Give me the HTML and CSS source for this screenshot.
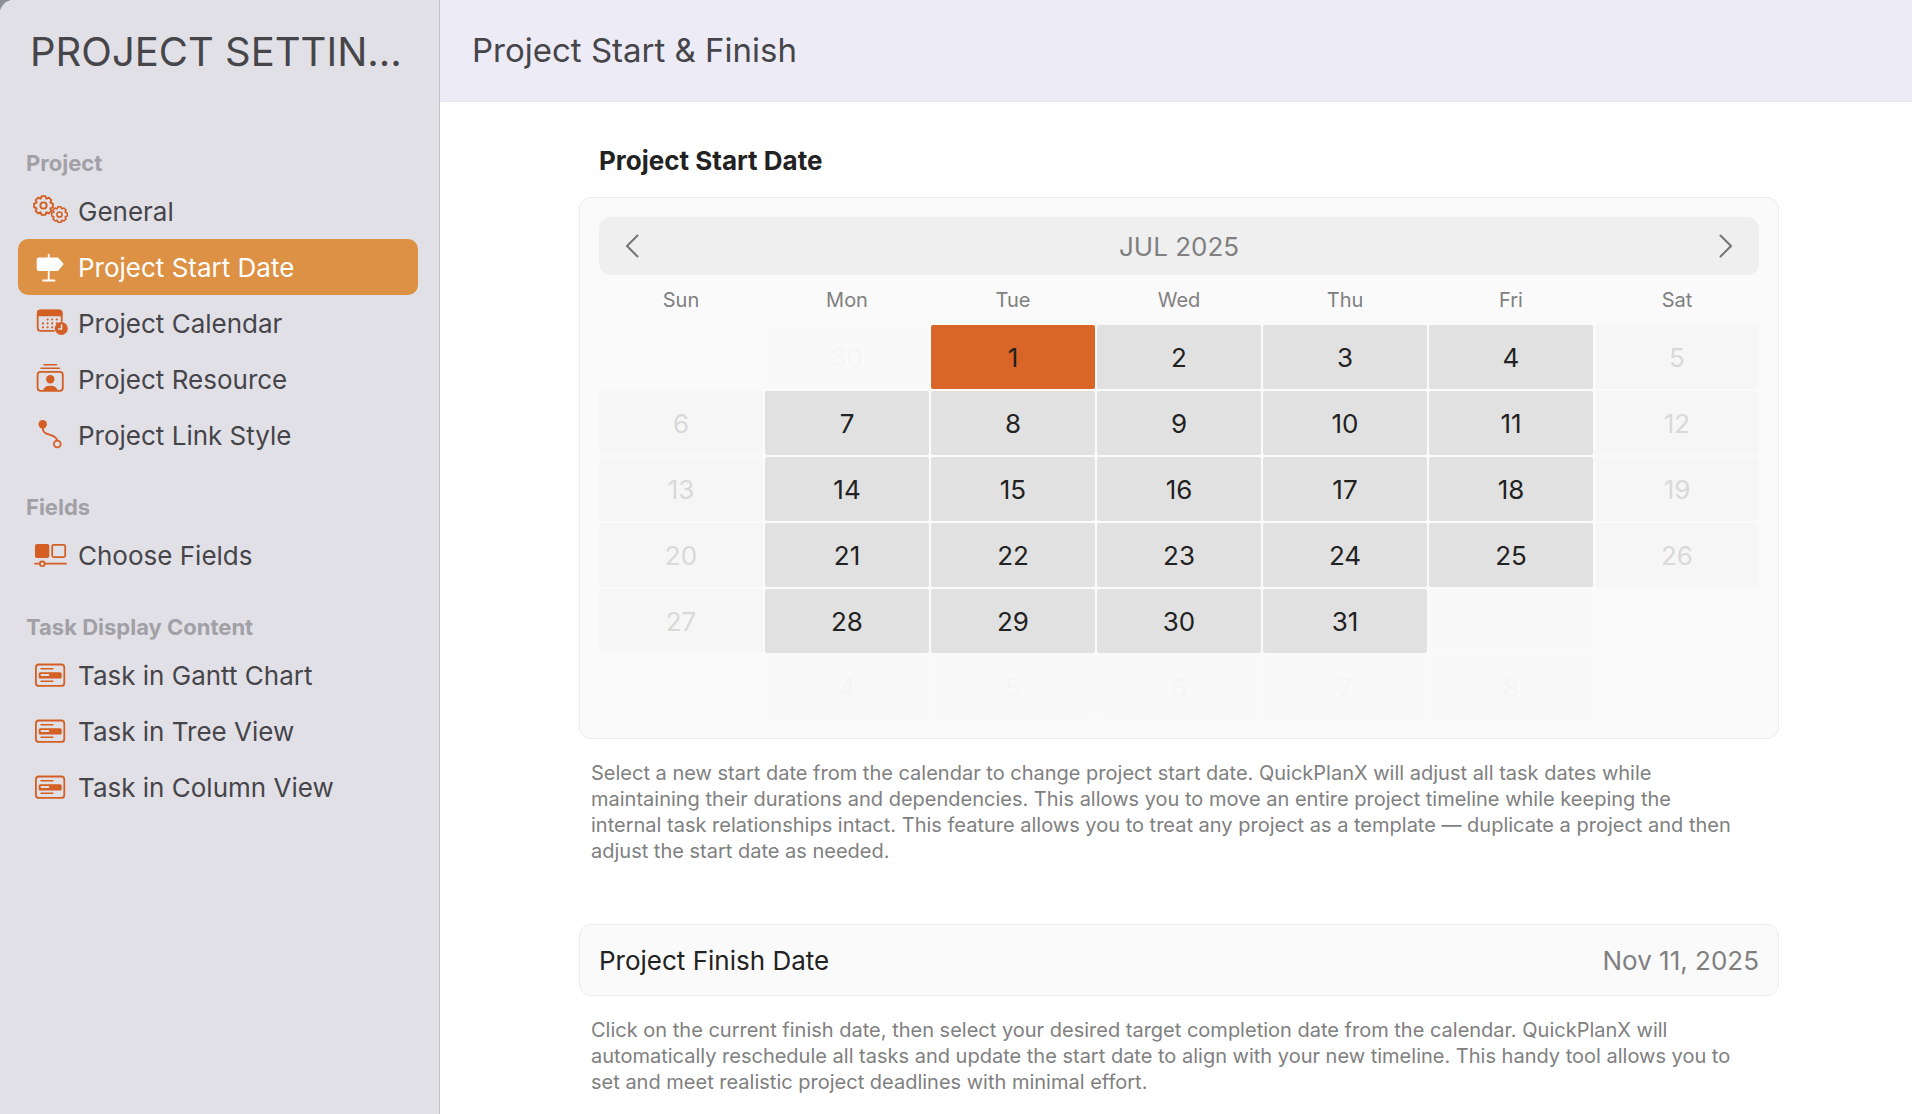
FILE: index.html
```html
<!DOCTYPE html>
<html lang="en">
<head>
    <meta charset="UTF-8">
    <title>Project Settings</title>
    <link rel="stylesheet" href="styles.css">
</head>
<body>
    <!-- shared icons -->
    <svg class="defs" aria-hidden="true">
        <symbol id="gear" viewBox="-11 -11 22 22">
            <path d="M6.8-2.5 9-1.8V1.8L6.8 2.5 6.5 3 7.6 5.1 5.1 7.6 3 6.5 2.5 6.8 1.8 9H-1.8L-2.5 6.8-3 6.5-5.1 7.6-7.6 5.1-6.5 3-6.8 2.5-9 1.8V-1.8L-6.8-2.5-6.5-3-7.6-5.1-5.1-7.6-3-6.5-2.5-6.8-1.8-9H1.8L2.5-6.8 3-6.5 5.1-7.6 7.6-5.1 6.5-3Z"/>
            <circle r="3"/>
        </symbol>
        <symbol id="task" viewBox="0 0 40 32">
            <rect x="5.9" y="5.5" width="28.4" height="21.4" rx="3"/>
            <path d="M11 9.7H23M11 22.3H23" stroke-width="1.4"/>
            <rect class="solid" x="8.7" y="13.2" width="23" height="6.2" rx="1.5"/>
            <path class="slot" d="M11.4 16H18.4"/>
        </symbol>
    </svg>

    <div class="window">
        <nav class="sidebar">
            <h1 title="PROJECT SETTINGS">PROJECT SETTIN...</h1>

            <h2>Project</h2>
            <ul>
                <li><a href="#general">
                    <svg class="icon" viewBox="0 0 40 32">
                        <use href="#gear" x="2" y="-1" width="23" height="23"/>
                        <use href="#gear" x="20" y="10" width="19" height="19"/>
                    </svg>
                    General</a></li>
                <li><a href="#start" class="active" aria-current="page">
                    <svg class="icon" viewBox="0 0 40 32">
                        <path class="solid" d="M8.7 6.5H28L33.2 12.2Q33.7 13 33.2 13.8L28 20H8.7Q6.7 20 6.7 18V8.5Q6.7 6.5 8.7 6.5Z"/>
                        <path d="M18.7 3.6V29.5M13 29.5H24.5"/>
                    </svg>
                    Project Start Date</a></li>
                <li><a href="#calendar">
                    <svg class="icon" viewBox="0 0 40 32">
                        <path d="M24 23.8H10.5Q7.7 23.8 7.7 21V6Q7.7 3.3 10.5 3.3H29Q31.7 3.3 31.7 6V14"/>
                        <path class="solid" d="M7 9.2V6Q7 2.8 10 2.8H29.4Q32.4 2.8 32.4 6V9.2Z"/>
                        <path class="dots" d="M17.6 12.5H27M13 16.4H27M13 20.3H23"/>
                        <circle class="solid" cx="31.3" cy="21.5" r="6.5"/>
                        <path class="hands" d="M31.6 18V22H28.6"/>
                    </svg>
                    Project Calendar</a></li>
                <li><a href="#resource">
                    <svg class="icon" viewBox="0 0 40 32">
                        <path d="M14 1.8H26.6M11 5.2H29.5" stroke-width="1.6"/>
                        <rect x="7.6" y="8.8" width="25.2" height="19" rx="3"/>
                        <circle class="solid" cx="20.3" cy="16.3" r="4.2"/>
                        <path class="solid" d="M12.7 28Q14 22.8 20.3 22.8T27.9 28Z"/>
                    </svg>
                    Project Resource</a></li>
                <li><a href="#links">
                    <svg class="icon" viewBox="0 0 40 32">
                        <circle class="solid" cx="12.7" cy="5.3" r="4.2"/>
                        <path d="M12.7 6C12 14 16 14.7 20 15.8S26.5 18.5 27.3 21.5"/>
                        <circle cx="27.3" cy="25" r="3.4"/>
                    </svg>
                    Project Link Style</a></li>
            </ul>

            <h2>Fields</h2>
            <ul>
                <li><a href="#fields">
                    <svg class="icon" viewBox="0 0 40 32">
                        <rect class="solid" x="5" y="5" width="14.3" height="14" rx="2"/>
                        <rect x="22.2" y="5.9" width="13" height="12.2" rx="1.5"/>
                        <path d="M5 24.7H9.6M15 24.7H36"/>
                        <circle cx="12.3" cy="24.7" r="2.4"/>
                    </svg>
                    Choose Fields</a></li>
            </ul>

            <h2>Task Display Content</h2>
            <ul>
                <li><a href="#gantt"><svg class="icon"><use href="#task"/></svg>Task in Gantt Chart</a></li>
                <li><a href="#tree"><svg class="icon"><use href="#task"/></svg>Task in Tree View</a></li>
                <li><a href="#column"><svg class="icon"><use href="#task"/></svg>Task in Column View</a></li>
            </ul>
        </nav>

        <main>
            <header>Project Start &amp; Finish</header>

            <div class="content">
                <h3>Project Start Date</h3>
                <section class="card calendar">
                    <div class="month">
                        <button type="button" aria-label="Previous month">
                            <svg width="14" height="24" viewBox="0 0 14 24"><path d="M12.5 1.5 2 12 12.5 22.5"/></svg>
                        </button>
                        <span>JUL 2025</span>
                        <button type="button" aria-label="Next month">
                            <svg width="14" height="24" viewBox="0 0 14 24"><path d="M1.5 1.5 12 12 1.5 22.5"/></svg>
                        </button>
                    </div>
                    <table>
                        <thead>
                            <tr><th>Sun</th><th>Mon</th><th>Tue</th><th>Wed</th><th>Thu</th><th>Fri</th><th>Sat</th></tr>
                        </thead>
                        <tbody>
                            <tr><td></td><td class="other">30</td><td class="selected">1</td><td>2</td><td>3</td><td>4</td><td class="off">5</td></tr>
                            <tr><td class="off">6</td><td>7</td><td>8</td><td>9</td><td>10</td><td>11</td><td class="off">12</td></tr>
                            <tr><td class="off">13</td><td>14</td><td>15</td><td>16</td><td>17</td><td>18</td><td class="off">19</td></tr>
                            <tr><td class="off">20</td><td>21</td><td>22</td><td>23</td><td>24</td><td>25</td><td class="off">26</td></tr>
                            <tr><td class="off">27</td><td>28</td><td>29</td><td>30</td><td>31</td><td class="other"></td><td></td></tr>
                            <tr><td></td><td class="other">4</td><td class="other">5</td><td class="other">6</td><td class="other">7</td><td class="other">8</td><td></td></tr>
                        </tbody>
                    </table>
                </section>
                <p>Select a new start date from the calendar to change project start date. QuickPlanX will adjust all task dates while maintaining their durations and dependencies. This allows you to move an entire project timeline while keeping the internal task relationships intact. This feature allows you to treat any project as a template — duplicate a project and then adjust the start date as needed.</p>

                <section class="card finish">
                    <span id="finish-label">Project Finish Date</span>
                    <button type="button" aria-describedby="finish-label">Nov 11, 2025</button>
                </section>
                <p>Click on the current finish date, then select your desired target completion date from the calendar. QuickPlanX will automatically reschedule all tasks and update the start date to align with your new timeline. This handy tool allows you to set and meet realistic project deadlines with minimal effort.</p>
            </div>
        </main>
    </div>
</body>
</html>
```
FILE: styles.css
```css
* { box-sizing: border-box; }
body { margin: 0; font-family: Inter, "Liberation Sans", sans-serif; font-size: 26px; color: #222; background-color: #8d9195; }
h1, h2, h3, ul, p { margin: 0; padding: 0; font-weight: normal; }
.defs { display: none; }
button { padding: 0; border: none; background: none; font: inherit; color: #808080; cursor: pointer; }
.window {
    display: flex;
    min-height: 100vh;
    background-color: white;
    border-top-left-radius: 14px;
    overflow: hidden;
}

/* sidebar */
.sidebar {
    flex: 0 0 440px; min-width: 0;
    padding: 0 21px 0 18px;
    background-color: #e1e0e6;
    border-right: 1px solid #c3c2c8;
    color: #46454a;
}
.sidebar h1 {
    height: 119px; padding: 24px 0 0 12px;
    font-size: 40px; line-height: 56px;
    white-space: nowrap;
}
.sidebar h2 {
    margin-top: 24px; padding-left: 8px;
    font-size: 22px; line-height: 40px;
    font-weight: 700;
    color: #a1a0a6;
}
.sidebar ul { list-style: none; }
.sidebar a {
    display: flex; align-items: center;
    height: 56px; padding-left: 12px;
    gap: 8px;
    border-radius: 10px;
    color: inherit; text-decoration: none;
    white-space: nowrap;
}
.sidebar a.active { background-color: #dd9144; color: white; }
.icon {
    flex: none; width: 40px; height: 32px;
    overflow: visible;
    fill: none;
    stroke: #d45f24; stroke-width: 1.8;
    stroke-linecap: round; stroke-linejoin: round;
}
.solid { fill: #d45f24; stroke: none; }
.active .icon { stroke: white; }
.active .solid { fill: white; }
.slot { stroke: #e1e0e6; }
.hands { stroke: #e1e0e6; stroke-width: 1.5; }
.dots { stroke-width: 2.2; stroke-dasharray: 0 4.6; }

/* main area */
main { flex: 1; min-width: 0; }
header {
    height: 102px; padding-left: 32px;
    font-size: 33px; line-height: 100px;
    color: #46454a; background-color: #edebf5;
    border-bottom: 1px solid #e7e5ee;
}
.content { max-width: 1206px; margin: 0 auto; padding: 35px 0 0 6px; }
.content h3 {
    padding-left: 20px; margin-bottom: 12px;
    font-size: 26px; line-height: 48px;
    font-weight: 700;
}
.content p {
    max-width: 1170px; padding: 0 12px;
    margin: 21px 0 60px;
    font-size: 20px; line-height: 26px;
    color: #808080;
}
.content p:last-child { margin-bottom: 0; }
.card {
    padding: 19px;
    background-color: #fafafa;
    border: 1px solid #ececec;
    border-radius: 12px;
}
.month {
    display: flex; align-items: center; justify-content: space-between;
    height: 58px; padding: 0 26px;
    background-color: #efefef;
    border-radius: 12px;
    color: #808080;
}
.month svg {
    display: block;
    fill: none; stroke: #747474; stroke-width: 2;
    stroke-linecap: round; stroke-linejoin: round;
}
.calendar table {
    width: calc(100% + 4px); margin: 0 -2px -2px;
    table-layout: fixed;
    border-spacing: 2px;
}
.calendar th { height: 46px; padding: 0; font-size: 20px; font-weight: normal; color: #808080; }
.calendar td { height: 64px; padding: 0; text-align: center; border-radius: 2px; }
.calendar td:not(:empty) { background-color: #e1e1e1; }
.calendar td.selected { background-color: #d96528; }
.calendar td.off { background-color: #f6f6f6; color: #d9d9d9; }
.calendar td.other { background-color: #f9f9f9; color: #f5f5f5; }
.finish { display: flex; align-items: center; justify-content: space-between; height: 72px; }
```
